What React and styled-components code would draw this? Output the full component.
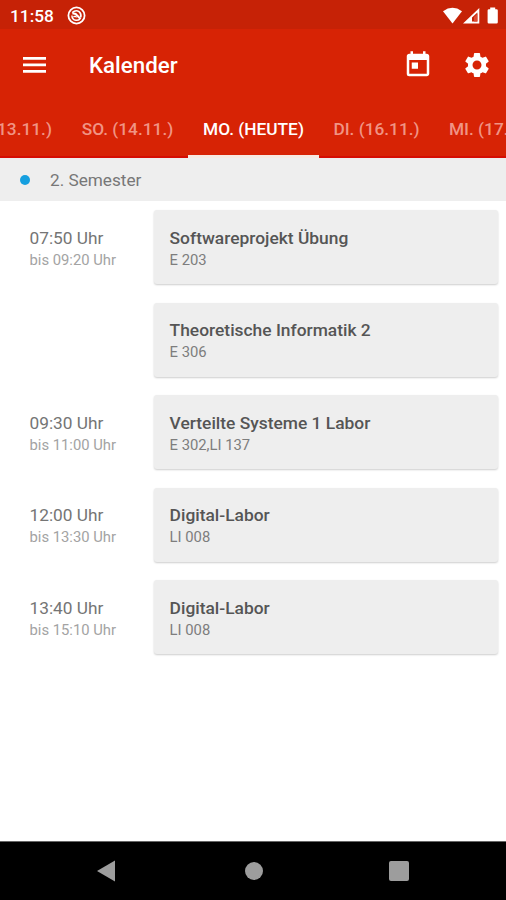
import React, { useState } from 'react';
import styled, { createGlobalStyle } from 'styled-components'
import { MdToday, MdSettings } from 'react-icons/md';

const days = [
    { label: 'SA. (13.11.)', width: 122 },
    { label: 'SO. (14.11.)', width: 121 },
    { label: 'MO. (HEUTE)', width: 131 },
    { label: 'DI. (16.11.)', width: 115 },
    { label: 'MI. (17.11.)', width: 120 },
];

const lectures = [
    { from: '07:50 Uhr', to: 'bis 09:20 Uhr', title: 'Softwareprojekt Übung', room: 'E 203' },
    { title: 'Theoretische Informatik 2', room: 'E 306' },
    { from: '09:30 Uhr', to: 'bis 11:00 Uhr', title: 'Verteilte Systeme 1 Labor', room: 'E 302,LI 137' },
    { from: '12:00 Uhr', to: 'bis 13:30 Uhr', title: 'Digital-Labor', room: 'LI 008' },
    { from: '13:40 Uhr', to: 'bis 15:10 Uhr', title: 'Digital-Labor', room: 'LI 008' },
];

const StatusIcons = () => (
    <svg width="56" height="18" viewBox="0 0 56 18" fill="#fff">
        <path d="M0 4.2Q9.5 -2.6 19 4.2L9.5 16.5Z" />
        <path fillRule="evenodd" d="M20 16.5L36.3 1V16.5ZM29 14.6H34.4V5.4L29 10.6Z" />
        <path d="M31 14.6V10L34.4 6.8V14.6Z" fill="#dd4a33" />
        <path d="M47.2 0.5H52.2V2.2H53.5Q54.8 2.2 54.8 3.5V15.2Q54.8 16.5 53.5 16.5H45.9Q44.6 16.5 44.6 15.2V3.5Q44.6 2.2 45.9 2.2H47.2Z" />
    </svg>
)

const NotificationIcon = () => (
    <svg width="19" height="19" viewBox="0 0 19 19" fill="none" stroke="#fff">
        <circle cx="9.5" cy="9.5" r="8.1" strokeWidth="1.8" />
        <path d="M5.2 6.6Q8.6 3.6 12 5.6Q14.6 7.6 13.8 11.4" strokeWidth="1.6" />
        <path d="M4.9 9.4Q5 13.6 9 14.2Q11.4 14.4 13 13.2" strokeWidth="1.5" />
        <path d="M5.4 7.2L8.6 8L13.6 13" strokeWidth="2.1" />
        <path d="M6.4 11.2Q8 9.4 9.6 11.4" strokeWidth="1.2" />
    </svg>
)

const MenuIcon = () => (
    <svg width="24" height="16" viewBox="0 0 24 16" fill="#fff">
        <path d="M1 0H24V2.8H1ZM1 6.5H24V9.3H1ZM1 13H24V15.8H1Z" />
    </svg>
)

const App = () => {

    const [active, setActive] = useState(2)

    return (
        <Screen>
            <GlobalStyle />
            <StatusBar>
                <Clock>11:58</Clock>
                <NotificationIcon />
                <Spacer />
                <StatusIcons />
            </StatusBar>
            <Toolbar>
                <IconButton aria-label="Menü"><MenuIcon /></IconButton>
                <Title>Kalender</Title>
                <Spacer />
                <IconButton aria-label="Heute"><MdToday size={30} /></IconButton>
                <IconButton aria-label="Einstellungen"><MdSettings size={30} /></IconButton>
            </Toolbar>
            <Tabs>
                {days.map((day, i) => (
                    <Tab key={day.label} $width={day.width} $active={i === active} onClick={() => setActive(i)}>
                        {day.label}
                    </Tab>
                ))}
            </Tabs>
            <Semester>
                <Dot />
                <span>2. Semester</span>
            </Semester>
            <List>
                {lectures.map((lecture, i) => (
                    <Row key={i}>
                        <Time>
                            <From>{lecture.from}</From>
                            <To>{lecture.to}</To>
                        </Time>
                        <Card>
                            <Name>{lecture.title}</Name>
                            <Room>{lecture.room}</Room>
                        </Card>
                    </Row>
                ))}
            </List>
            <NavBar>
                <svg width="18" height="22" viewBox="0 0 18 22"><path d="M0 11L18 0.5V21.5Z" fill="#9d9d9d" /></svg>
                <HomeKey />
                <RecentKey />
            </NavBar>
        </Screen>
    );
};

const GlobalStyle = createGlobalStyle`
    * {
        box-sizing: border-box;
    }
    body {
        margin: 0;
        font-family: Roboto, sans-serif;
    }
`
const Screen = styled.div`
    display: flex;
    flex-direction: column;
    width: 506px;
    height: 900px;
    overflow: hidden;
    background: #fff;
`
const Spacer = styled.div`
    flex: 1;
`
const StatusBar = styled.div`
    display: flex;
    align-items: center;
    flex: none;
    height: 29px;
    padding: 2px 7px 0 10px;
    background: #c62206;
`
const Clock = styled.span`
    width: 56.5px;
    color: #fff;
    font-size: 17.3px;
    font-weight: 500;
    line-height: 26px;
`
const Toolbar = styled.div`
    display: flex;
    align-items: center;
    flex: none;
    height: 73px;
    padding: 0 6px 1px 11px;
    background: #d72305;
`
const IconButton = styled.button`
    display: flex;
    align-items: center;
    justify-content: center;
    width: 46px;
    height: 46px;
    margin-right: 13px;
    padding: 0;
    border: 0;
    background: none;
    color: #fff;
    cursor: pointer;

    &:last-child {
        margin-right: 0;
    }
`
const Title = styled.h1`
    margin: 0 0 0 19px;
    color: #fff;
    font-size: 22.3px;
    font-weight: 500;
    line-height: 30px;
`
const Tabs = styled.div`
    display: flex;
    flex: none;
    height: 56px;
    margin-left: -55px;
    background: #d72305;
    box-shadow: inset 0 -2px #d50d03;
`
const Tab = styled.div`
    flex: none;
    width: ${props => props.$width}px;
    padding-top: 2px;
    border-bottom: 3px solid ${props => props.$active ? '#f6e9e2' : 'transparent'};
    color: ${props => props.$active ? '#fff' : '#f09484'};
    font-size: 17.3px;
    font-weight: 500;
    line-height: 50px;
    text-align: center;
    white-space: nowrap;
    cursor: pointer;
`
const Semester = styled.div`
    display: flex;
    align-items: center;
    flex: none;
    height: 43px;
    background: #eee;
    padding: 0 20px;
    color: #777;
    font-size: 17.2px;
`
const Dot = styled.span`
    width: 10px;
    height: 10px;
    margin-right: 20px;
    border-radius: 50%;
    background: #159fdf;
`
const List = styled.div`
    display: flex;
    flex-direction: column;
    flex: 1;
    gap: 18.5px;
    padding: 9px 8px 0 29.5px;
`
const Row = styled.div`
    display: flex;
    height: 74px;
`
const Time = styled.div`
    width: 124.5px;
    padding-top: 16.8px;
`
const From = styled.div`
    color: #757575;
    font-size: 17.3px;
    line-height: 22px;
`
const To = styled.div`
    color: #a3a3a3;
    font-size: 14.8px;
    line-height: 22px;
`
const Card = styled.div`
    flex: 1;
    padding: 16.8px 15.6px 0;
    border-radius: 3px;
    background: #eee;
    box-shadow: 0 1px 2px rgba(0, 0, 0, 0.2);
`
const Name = styled.div`
    color: #555;
    font-size: 17.4px;
    font-weight: 500;
    line-height: 22px;
`
const Room = styled.div`
    color: #7d7d7d;
    font-size: 14.8px;
    line-height: 22px;
`
const NavBar = styled.div`
    display: flex;
    align-items: center;
    justify-content: space-between;
    flex: none;
    height: 59px;
    padding: 0 97px 0 97px;
    border-top: 1px solid #666;
    background: #000;
`
const HomeKey = styled.span`
    width: 18px;
    height: 18px;
    margin-left: 3px;
    border-radius: 50%;
    background: #9d9d9d;
`
const RecentKey = styled.span`
    width: 20px;
    height: 20px;
    border-radius: 2px;
    background: #9d9d9d;
`

export default App;
